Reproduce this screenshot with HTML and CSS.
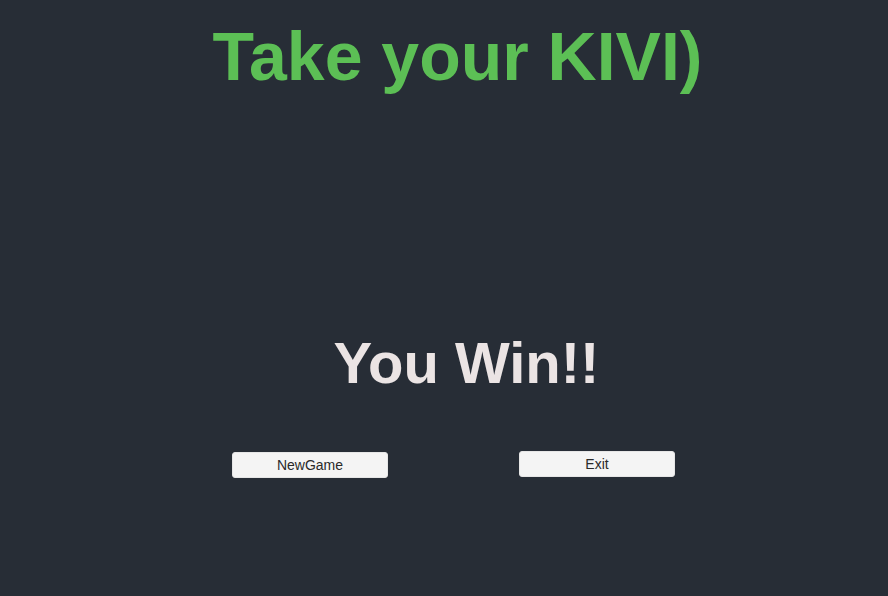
FILE: index.html
```html
<!DOCTYPE html>
<html lang="en">
<head>
    <meta charset="UTF-8">
    <meta name="viewport" content="width=device-width, initial-scale=1.0">
    <title>Take your KIVI)</title>
    <link rel="stylesheet" href="styles.css">
</head>
<body>
    <div class="screen">
        <h1 class="title">Take your KIVI)</h1>
        <h2 class="result">You Win!!</h2>
        <div class="button-container">
            <button class="btn btn-new" onclick="location.reload()">NewGame</button>
            <button class="btn btn-exit" onclick="window.close()">Exit</button>
        </div>
    </div>
</body>
</html>
```

FILE: styles.css
```css
body {
    margin: 0;
    background-color: #272d36;
    font-family: "Liberation Sans", Arial, sans-serif;
}
.screen {
    width: 888px;
    height: 596px;
    padding-top: 18px;
    box-sizing: border-box;
}
.title {
    margin: 0;
    padding-left: 27px;
    text-align: center;
    font-size: 68px;
    line-height: 76px;
    font-weight: bold;
    color: #5cbf55;
    filter: blur(0.6px);
}
.result {
    margin: 236px 0 0 0;
    padding-left: 45px;
    text-align: center;
    font-size: 58px;
    line-height: 65px;
    font-weight: bold;
    color: #ebe4e4;
    filter: blur(0.6px);
}
.button-container {
    display: flex;
    align-items: flex-start;
    gap: 131px;
    padding-left: 232px;
    margin-top: 56px;
}
.btn {
    width: 156px;
    height: 26px;
    padding: 0;
    background-color: #f4f4f4;
    color: #2a2a2a;
    border: 1px solid #e6e6e6;
    border-radius: 3px;
    font-family: "Liberation Sans", Arial, sans-serif;
    font-size: 14px;
    cursor: pointer;
}
.btn-new {
    margin-top: 1px;
}
.btn:hover {
    background-color: #ffffff;
}
```
